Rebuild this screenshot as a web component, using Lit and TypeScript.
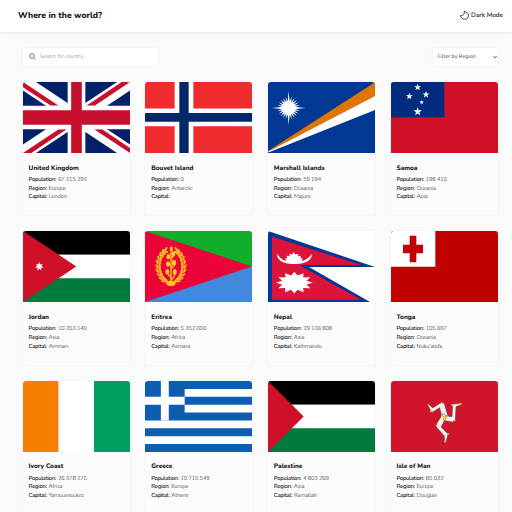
import { LitElement, html, css, svg, TemplateResult } from "lit";
import { customElement, property } from "lit/decorators.js";

/** Points of a star with n rays, centred on (cx, cy). */
const star = (cx: number, cy: number, outer: number, inner: number, n = 5): string =>
  Array.from({ length: n * 2 }, (_, i) => {
    const r = i % 2 ? inner : outer;
    const a = (i * Math.PI) / n - Math.PI / 2;
    return `${(cx + r * Math.cos(a)).toFixed(1)},${(cy + r * Math.sin(a)).toFixed(1)}`;
  }).join(" ");

/** One branch of the wreath: leaves in pairs, tips fanning outwards. */
const leaves = (side: number) =>
  Array.from({ length: 20 }, (_, i) => {
    const deg = -68 + i * 7;
    const a = (deg * Math.PI) / 180;
    const outer = i % 2 === 0;
    const x = 78 + side * (outer ? 42 : 34) * Math.cos(a);
    const y = 105 + (outer ? 54 : 47) * Math.sin(a);
    const turn = side * (deg * 0.9 + (outer ? 30 : -22));
    return svg`<ellipse cx=${x} cy=${y} rx="3" ry="8" transform="rotate(${turn} ${x} ${y})"/>`;
  });

// All flags share a 321 x 213 drawing area.
const flags: Record<string, TemplateResult> = {
  uk: svg`<path fill="#012169" d="M0 0h321v213H0z"/>
    <path stroke="#fff" stroke-width="43" d="M0 0l321 213M321 0L0 213"/>
    <path fill="#c8102e" d="M0 0L107 71H84L0 16zM321 0h-25L190 71h25zM0 213h25l106-71h-24zM321 213v-15l-84-56h-24z"/>
    <path stroke="#fff" stroke-width="53" d="M160.500 0v213"/><path stroke="#fff" stroke-width="71" d="M0 106.500h321"/>
    <path stroke="#c8102e" stroke-width="32" d="M160.500 0v213"/><path stroke="#c8102e" stroke-width="43" d="M0 106.500h321"/>`,
  bouvet: svg`<path fill="#ef2b2d" d="M0 0h321v213H0z"/><path stroke="#fff" stroke-width="56" d="M117 0v213"/><path stroke="#fff" stroke-width="53" d="M0 106h321"/>
    <path stroke="#002868" stroke-width="28" d="M117 0v213"/><path stroke="#002868" stroke-width="26" d="M0 106h321"/>`,
  marshall: svg`<path fill="#003893" d="M0 0h321v213H0z"/><path fill="#dd7500" d="M0 207L321 1v42L0 210z"/><path fill="#fff" d="M0 209L321 42v42L3 211z"/>
    <polygon fill="#fff" points=${star(62, 78, 35, 19, 24)}/><polygon fill="#fff" points=${star(62, 78, 51, 6, 4)}/>`,
  samoa: svg`<path fill="#ce1126" d="M0 0h321v213H0z"/><path fill="#002b7f" d="M0 0h160v106H0z"/>
    <g fill="#fff"><polygon points=${star(80, 16, 11, 4.2)}/><polygon points=${star(55, 43, 11, 4.2)}/><polygon points=${star(105, 38, 11, 4.2)}/><polygon points=${star(92, 61, 7, 2.8)}/><polygon points=${star(80, 89, 13.5, 5.2)}/></g>`,
  jordan: svg`<path d="M0 0h321v71H0z"/><path fill="#fff" d="M0 71h321v71H0z"/><path fill="#007a3d" d="M0 142h321v71H0z"/><path fill="#ce1126" d="M0 0l160 106.500L0 213z"/><polygon fill="#fff" points=${star(49, 106.5, 13.5, 6.5, 7)}/>`,
  eritrea: svg`<path fill="#12ad2b" d="M0 0h321v107H0z"/><path fill="#4189dd" d="M0 107h321v106H0z"/><path fill="#ea0437" d="M0 0l321 106.500L0 213z"/>
    <g fill="#ffc726">${leaves(1)}${leaves(-1)}
    <path fill="none" stroke="#ffc726" stroke-width="4" d="M78 158V62M78 148l12-15M78 140l-12-14M78 114l10-12M78 106l-10-12M78 85l8-12"/>
    <ellipse cx="79" cy="54" rx="5" ry="8"/><ellipse cx="85" cy="69" rx="6" ry="8"/><ellipse cx="70" cy="77" rx="6" ry="8"/><ellipse cx="87" cy="95" rx="6.500" ry="9"/><ellipse cx="69" cy="99" rx="6" ry="8"/><ellipse cx="89" cy="123" rx="6" ry="9"/><ellipse cx="67" cy="122" rx="6" ry="8"/><path d="M61 156l17-9 17 9-9 9H70z"/></g>`,
  nepal: svg`<path fill="#fff" d="M0 0h321v213H0z"/><path fill="#003893" d="M0 0l321 108H123l183 105H0z"/><path fill="#dc143c" d="M12 17l268 85H93l187 104H12z"/>
    <g fill="#fff"><path d="M26 68q14 27 53 27t54-27q-3 31-54 31T26 68z"/><path d="M27 69q15 20 27 21l-2-8 6 0-2-8 8 2 1-8 7 3 5-7 6 7 7-3 1 8 8-2-2 8 7 0-3 8q14-1 31-21-11 29-53 29T27 69z"/>
    <polygon transform="translate(79 155) scale(1.350 .8)" points=${star(0, 0, 41, 28, 12)}/></g>`,
  tonga: svg`<path fill="#c10000" d="M0 0h321v213H0z"/><path fill="#fff" d="M0 0h133v107H0z"/><path fill="#c10000" d="M56 14h20v27h20v26H76v27H56V67H36V41h20z"/>`,
  ivory: svg`<path fill="#f77f00" d="M0 0h107v213H0z"/><path fill="#fff" d="M107 0h107v213H107z"/><path fill="#009e60" d="M213 0h108v213H213z"/>`,
  greece: svg`<path fill="#0d5eaf" d="M0 0h321v213H0z"/><path stroke="#fff" stroke-width="23.700" d="M119 35.500h202M119 82.800h202M0 130.200h321M0 177.500h321M0 59.200h119"/><path stroke="#fff" stroke-width="23.700" d="M59.500 0v118.300"/>`,
  palestine: svg`<path d="M0 0h321v71H0z"/><path fill="#fff" d="M0 71h321v71H0z"/><path fill="#007a3d" d="M0 142h321v71H0z"/><path fill="#ce1126" d="M0 0l107 106.500L0 213z"/>`,
  man: svg`<path fill="#cf142b" d="M0 0h321v213H0z"/>
    <g fill="#f2f2f2" stroke="#444" stroke-width="1.500" stroke-linejoin="round">
    <path d="M154 112l-8-32-17 11-7 4-12-24 5 0 10 10 28-18 7 5 11 38z"/>
    <path d="M154 103l29 4 2-30-4-7 31-3-2 4-15 6-2 40-9 6-33-6z"/>
    <path d="M168 105l-18 33 21 21-6 25-4-2-1-17-24-27 1-10 18-30z"/></g>
    <g fill="none" stroke="#e5b51f" stroke-width="4"><path d="M151 101l9 8 9-5M160 109l-3 12M150 65l6 5M116 92l9-2M110 70l3 4M181 72l7 1M205 69l7 0M188 120l5-3M134 133l5 1M169 157l5 3M160 180l3 4"/></g>`,
};

interface Country {
  flag: string;
  name: string;
  population: string;
  region: string;
  capital: string;
}

const countries: Country[] = [
  ["uk", "United Kingdom", "67 215 293", "Europe", "London"],
  ["bouvet", "Bouvet Island", "0", "Antarctic", ""],
  ["marshall", "Marshall Islands", "59 194", "Oceania", "Majuro"],
  ["samoa", "Samoa", "198 410", "Oceania", "Apia"],
  ["jordan", "Jordan", "10 203 140", "Asia", "Amman"],
  ["eritrea", "Eritrea", "5 352 000", "Africa", "Asmara"],
  ["nepal", "Nepal", "29 136 808", "Asia", "Kathmandu"],
  ["tonga", "Tonga", "105 697", "Oceania", "Nuku'alofa"],
  ["ivory", "Ivory Coast", "26 378 275", "Africa", "Yamoussoukro"],
  ["greece", "Greece", "10 715 549", "Europe", "Athens"],
  ["palestine", "Palestine", "4 803 269", "Asia", "Ramallah"],
  ["man", "Isle of Man", "85 032", "Europe", "Douglas"],
].map(([flag, name, population, region, capital]) => ({ flag, name, population, region, capital }));

@customElement("country-card")
export class CountryCard extends LitElement {
  @property({ attribute: false }) country!: Country;

  static styles = css`
    :host {
      display: block;
      height: 133.300px;
      border-radius: 3px;
      overflow: hidden;
      background: #fbfbfb;
      box-shadow: 0 0 3px rgba(0, 0, 0, 0.055);
    }
    .flag { display: block; width: 100%; height: 71px; }
    .body { padding: 9.700px 0 0 5.800px; }
    .name { margin: 0; font-size: 6.500px; line-height: 11px; font-weight: 800; white-space: nowrap; }
    .facts { margin: 2.300px 0 0; font-size: 5.700px; line-height: 8.600px; }
    .fact { display: flex; gap: 1.700px; white-space: nowrap; }
    .label { font-weight: 600; letter-spacing: -0.170px; }
    .value { margin: 0; font-weight: 300; letter-spacing: -0.120px; color: #2a3138; }
  `;

  private fact(label: string, value: string) {
    return html`<div class="fact"><dt class="label">${label}:</dt><dd class="value">${value}</dd></div>`;
  }

  render() {
    const c = this.country;
    return html`
      <svg class="flag" viewBox="0 0 321 213" preserveAspectRatio="none">${flags[c.flag]}</svg>
      <div class="body">
        <h2 class="name">${c.name}</h2>
        <dl class="facts">
          ${this.fact("Population", c.population)}${this.fact("Region", c.region)}${this.fact("Capital", c.capital)}
        </dl>
      </div>`;
  }
}

@customElement("app-root")
export class AppRoot extends LitElement {
  static styles = css`
    :host {
      display: block;
      height: 512px;
      overflow: hidden;
      background: #fafafa;
      color: #111517;
      font-family: Nunito, "Nunito Sans", "Open Sans", sans-serif;
      text-rendering: geometricPrecision;
    }
    .header {
      display: flex;
      align-items: center;
      justify-content: space-between;
      box-sizing: border-box;
      height: 32px;
      padding: 0 9px 0 18px;
      background: #fff;
      box-shadow: 0 0 4px rgba(0, 0, 0, 0.12);
    }
    .title { margin: 0; font-size: 8.600px; font-weight: 800; white-space: nowrap; }
    .mode { display: flex; align-items: center; gap: 2.500px; font-size: 6.400px; font-weight: 600; white-space: nowrap; }
    .moon { width: 9px; height: 9px; margin-top: -1.500px; }
    .main { padding: 16px 14.300px 0 22.800px; }
    .filters { display: flex; justify-content: space-between; height: 17.500px; margin-bottom: 16.700px; }
    .field {
      display: flex;
      align-items: center;
      box-sizing: border-box;
      background: #fff;
      border-radius: 2px;
      box-shadow: 0 0 3px rgba(0, 0, 0, 0.07);
      font-size: 5.400px;
      white-space: nowrap;
    }
    .search { width: 135px; padding-left: 6px; gap: 4px; color: #858585; font-weight: 300; }
    .glass { width: 7px; height: 7px; }
    .select { width: 65px; padding: 0 1.200px 0 5px; justify-content: space-between; color: #45494c; font-weight: 400; }
    .chevron { width: 4px; height: 4px; }
    .grid { display: grid; grid-template-columns: repeat(4, 107px); justify-content: space-between; row-gap: 16px; }
  `;

  render() {
    return html`
      <header class="header">
        <h1 class="title">Where in the world?</h1>
        <div class="mode">
          <svg class="moon" viewBox="0 0 18 18" fill="none" stroke="#222" stroke-width="1.700" stroke-linejoin="round">
            <path d="M8 1c2 5-1.500 9-7 8C1.500 13.500 5 16.500 9.500 16.500S17 13 17 9 13 1.300 8 1z" />
          </svg>
          <span>Dark Mode</span>
        </div>
      </header>
      <main class="main">
        <div class="filters">
          <div class="field search">
            <svg class="glass" viewBox="0 0 14 14" fill="none" stroke="#555" stroke-width="1.600">
              <circle cx="6" cy="6" r="4.600" /><path d="M9.500 9.500L13 13" />
            </svg>
            <span>Search for country...</span>
          </div>
          <div class="field select">
            <span>Filter by Region</span>
            <svg class="chevron" viewBox="0 0 8 8" fill="none" stroke="#222" stroke-width="1.800"><path d="M1 2.500l3 3 3-3" /></svg>
          </div>
        </div>
        <section class="grid">${countries.map((c) => html`<country-card .country=${c}></country-card>`)}</section>
      </main>`;
  }
}
